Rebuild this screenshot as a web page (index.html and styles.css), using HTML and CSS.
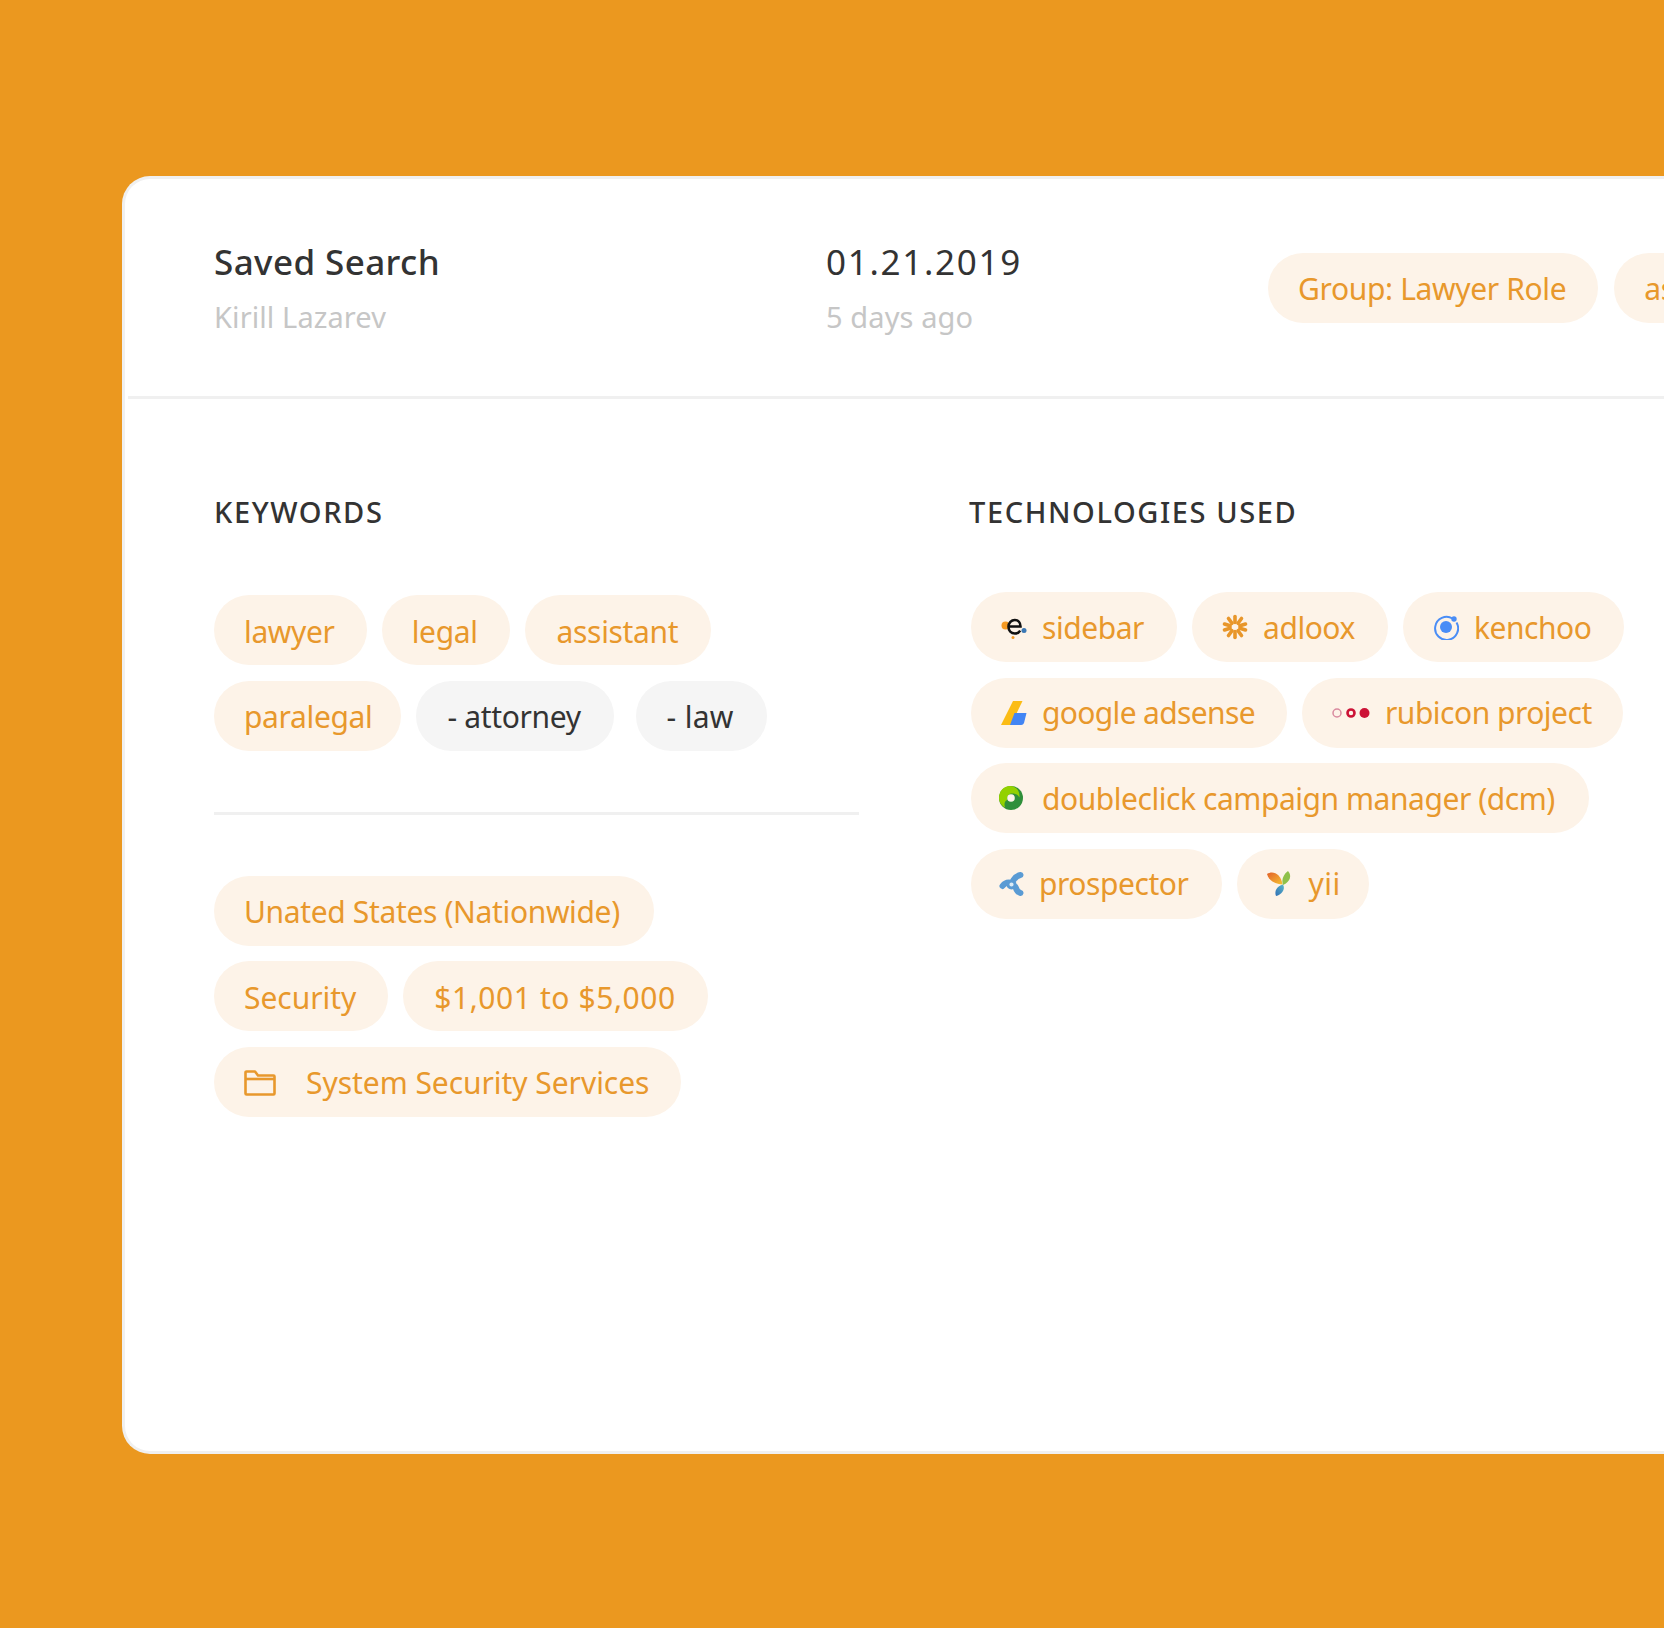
FILE: index.html
```html
<!DOCTYPE html>
<html lang="en">
<head>
<meta charset="utf-8">
<title>Saved Search</title>
<link rel="stylesheet" href="styles.css">
</head>
<body>
<main class="card">
  <header class="head">
    <div class="who">
      <h1 class="title">Saved Search</h1>
      <p class="sub">Kirill Lazarev</p>
    </div>
    <div class="when">
      <p class="date">01.21.2019</p>
      <p class="sub">5 days ago</p>
    </div>
    <div class="head-tags">
      <span class="chip">Group: Lawyer Role</span>
      <span class="chip">assistant</span>
    </div>
  </header>
  <div class="rule"></div>
  <div class="body">
    <section class="left">
      <h2 class="label">KEYWORDS</h2>
      <div class="chips kw">
        <div class="row">
          <span class="chip">lawyer</span>
          <span class="chip">legal</span>
          <span class="chip assistant">assistant</span>
        </div>
        <div class="row">
          <span class="chip paralegal">paralegal</span>
          <span class="chip grey">- attorney</span>
          <span class="chip grey law">- law</span>
        </div>
      </div>
      <div class="divider"></div>
      <div class="chips">
        <div class="row"><span class="chip states">Unated States (Nationwide)</span></div>
        <div class="row">
          <span class="chip plain">Security</span>
          <span class="chip money">$1,001 to $5,000</span>
        </div>
        <div class="row">
          <span class="chip plain">
            <svg class="folder-ico" viewBox="0 0 32 26" width="32" height="26" fill="none" stroke="#e8982c" stroke-width="2.600" stroke-linejoin="round"><path d="M1.500 8V2.500a1 1 0 0 1 1-1h8.500l3 4h15.500a1 1 0 0 1 1 1V23.500a1 1 0 0 1-1 1H2.500a1 1 0 0 1-1-1z"/><path d="M1.500 9h29"/></svg>
            System Security Services
          </span>
        </div>
      </div>
    </section>
    <section class="right">
      <h2 class="label">TECHNOLOGIES USED</h2>
      <div class="chips tech">
        <div class="row">
          <span class="chip ico">
            <svg class="logo" viewBox="0 0 26 26" width="26" height="26"><circle cx="4.500" cy="11.500" r="4" fill="#f59a23"/><path d="M8.500 12.500h11c0-4-2.300-6.500-5.700-6.500S7.500 8.800 7.500 12.800s2.700 6.700 6.300 6.700c2.500 0 4.300-1 5.400-2.900" fill="none" stroke="#111" stroke-width="2.600"/><circle cx="23" cy="16.500" r="2.500" fill="#3b78b5"/><circle cx="12" cy="23.500" r="1.500" fill="#f59a23"/></svg>
            sidebar
          </span>
          <span class="chip ico">
            <svg class="logo" viewBox="0 0 26 26" width="26" height="26"><g fill="none" stroke="#e8962a" stroke-width="3.600" stroke-linecap="round"><path d="M13 2.500v6"/><path d="M19.500 4.500l-3.500 4.800"/><path d="M23.500 10l-5.600 1.800"/><path d="M23.500 16l-5.600-1.800"/><path d="M19.500 21.500l-3.500-4.800"/><path d="M13 23.500v-6"/><path d="M6.500 21.500l3.500-4.800"/><path d="M2.500 16l5.600-1.800"/><path d="M2.500 10l5.600 1.800"/><path d="M6.500 4.500l3.500 4.800"/></g></svg>
            adloox
          </span>
          <span class="chip ico">
            <svg class="logo" viewBox="0 0 26 26" width="26" height="26"><path d="M19.500 4.500A11.500 11.500 0 1 0 23.500 8.500" fill="none" stroke="#4a8df6" stroke-width="2"/><circle cx="13" cy="13" r="6" fill="#4a8df6"/><circle cx="21" cy="5" r="2.700" fill="#4a8df6"/></svg>
            kenchoo
          </span>
        </div>
        <div class="row">
          <span class="chip ico adsense">
            <svg class="logo" viewBox="0 0 26 26" width="26" height="26"><path d="M0 25L12 1h9.500L10 25z" fill="#fbbc15"/><path d="M13.500 13H25.500L23 23a3 3 0 0 1-3 2H9z" fill="#4285f4"/></svg>
            google adsense
          </span>
          <span class="chip ico rubicon">
            <svg class="logo" viewBox="0 0 38 12" width="38" height="12"><circle cx="5" cy="6" r="4" fill="none" stroke="#d98a9f" stroke-width="1.500"/><circle cx="19" cy="6" r="3.500" fill="none" stroke="#cc1236" stroke-width="2.600"/><circle cx="32.500" cy="6" r="5" fill="#cc1236"/></svg>
            rubicon project
          </span>
        </div>
        <div class="row">
          <span class="chip ico dcm">
            <svg class="logo" viewBox="0 0 26 26" width="26" height="26"><circle cx="13" cy="13" r="12" fill="#2f8f3a"/><path d="M12 1C5.500 1 1 6.500 1 13c0 4 2.500 7.500 6 9.500C6 19 6.500 16 9 15c0-4 2-6.500 5-6.500 3 0 6 1 7.500 4C22 6 18 1 12 1z" fill="#93d100"/><circle cx="13" cy="13" r="3.800" fill="#fdf3e8"/></svg>
            doubleclick campaign manager (dcm)
          </span>
        </div>
        <div class="row">
          <span class="chip ico tight">
            <svg class="logo" viewBox="0 0 26 26" width="26" height="26"><g fill="none" stroke="#5a9bd4" stroke-width="6" stroke-linecap="round"><path d="M21.500 4C18 4.500 16 7 14.500 9"/><path d="M3.500 15C5.500 12.500 7.500 11.500 9.500 11.500"/><path d="M21.500 22C19 21.500 17.500 19 16.500 16"/></g><circle cx="12.500" cy="13.500" r="3.600" fill="#dcebf5" stroke="#5a9bd4" stroke-width="3"/></svg>
            prospector
          </span>
          <span class="chip ico yii">
            <svg class="logo" viewBox="0 0 26 26" width="26" height="26"><defs><linearGradient id="yL" x1="0" y1="0" x2="1" y2="1"><stop offset="0" stop-color="#e2602a"/><stop offset="1" stop-color="#f7c230"/></linearGradient><linearGradient id="yB" x1="1" y1="0" x2="0" y2="1"><stop offset="0" stop-color="#5bb6c9"/><stop offset="1" stop-color="#2f6fb5"/></linearGradient></defs><path d="M0 3C6-1 14 3 15.500 13.500 8 13 2 10 0 3z" fill="url(#yL)"/><path d="M21 0c4 4 2.500 11-5 14-2-6 1-11 5-14z" fill="#8fc04a"/><path d="M16 13.500c3 5-2 10.500-7 11.500-2-5 1-10 7-11.500z" fill="url(#yB)"/></svg>
            yii
          </span>
        </div>
      </div>
    </section>
  </div>
</main>
</body>
</html>
```

FILE: styles.css
```css
* { box-sizing: border-box; }
html, body { margin: 0; padding: 0; }
body {
  width: 1664px;
  height: 1628px;
  overflow: hidden;
  background: #eb981f;
  font-family: "Noto Sans", "Liberation Sans", sans-serif;
  padding: 176px 0 0 122px;
}
.card {
  width: 1700px;
  height: 1278px;
  background: #fff;
  border: 3px solid #f0f0f0;
  border-right: 0;
  border-radius: 28px 0 0 28px;
  padding: 0 0 0 3px;
}
.head {
  display: flex;
  height: 217px;
  padding: 60px 0 0 86px;
}
.who { width: 612px; }
.when { width: 442px; }
.title, .date {
  margin: 0;
  font-size: 35px;
  line-height: 46px;
  font-weight: 500;
  color: #333;
  letter-spacing: 0.4px;
}
.date { font-weight: 400; letter-spacing: 1.7px; }
.sub {
  margin: 12px 0 0;
  font-size: 29px;
  line-height: 40px;
  color: #c6c6c6;
  letter-spacing: 0.1px;
}
.head-tags { display: flex; gap: 16px; padding-top: 14px; flex: none; }
.rule { height: 3px; background: #f0f0f0; }
.body { display: flex; padding: 93px 0 0 86px; }
.left { width: 755px; }
.right { flex: 1; }
.label {
  margin: 0;
  font-size: 29px;
  line-height: 40px;
  font-weight: 500;
  color: #333;
  letter-spacing: 1.6px;
}
.chips { display: flex; flex-direction: column; gap: 15.5px; }
.row { display: flex; gap: 15px; }
.kw { margin-top: 63px; }
.tech { margin-top: 60px; margin-left: 2px; }
.chip {
  display: inline-flex;
  align-items: center;
  flex: none;
  height: 70px;
  padding: 0 32px 0 30px;
  border-radius: 35px;
  background: #fdf3e8;
  color: #e8982c;
  font-size: 30px;
  letter-spacing: -0.35px;
  white-space: nowrap;
}
.left .chip { padding-top: 2px; }
.assistant { padding-left: 32px; padding-right: 33px; }
.paralegal { padding-right: 29px; }
.states { padding-right: 34px; }
.plain { letter-spacing: -0.05px; }
.money { letter-spacing: 0.58px; padding-left: 31px; }
.grey { background: #f5f5f5; color: #333; padding-left: 31px; padding-right: 33px; }
.law { margin-left: 7px; letter-spacing: 0.3px; }
.divider { width: 645px; height: 3px; background: #f0f0f0; margin: 61px 0; }
.folder-ico { margin-right: 30px; }
.logo { margin-right: 15px; flex: none; }
.ico { letter-spacing: -0.45px; padding-right: 33px; }
.adsense { letter-spacing: -0.65px; padding-right: 32px; }
.rubicon { letter-spacing: -0.5px; padding-right: 31px; }
.dcm { padding-right: 34px; }
.dcm .logo { margin: 0 18px 0 -3px; }
.tight { padding-right: 34px; }
.tight .logo { margin: 0 14px 0 -2px; }
.yii { letter-spacing: 0.5px; padding-right: 28px; }
```
